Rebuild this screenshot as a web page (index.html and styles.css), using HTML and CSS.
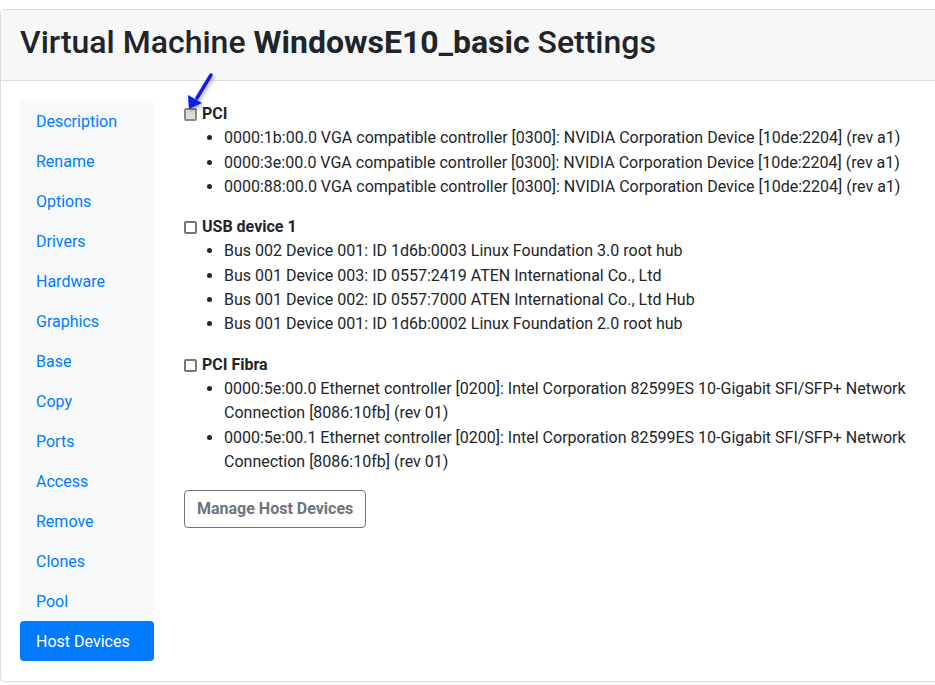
FILE: index.html
```html
<!DOCTYPE html>
<html>
<head>
<meta charset="utf-8">
<title>VM Settings</title>
<link rel="stylesheet" href="styles.css">
</head>
<body>
<div class="card">
  <div class="card-header">
    <h3 class="title">Virtual Machine <b>WindowsE10_basic</b> Settings</h3>
  </div>
  <div class="card-body">
    <nav class="nav-pills">
      <a class="nav-link">Description</a>
      <a class="nav-link">Rename</a>
      <a class="nav-link">Options</a>
      <a class="nav-link">Drivers</a>
      <a class="nav-link">Hardware</a>
      <a class="nav-link">Graphics</a>
      <a class="nav-link">Base</a>
      <a class="nav-link">Copy</a>
      <a class="nav-link">Ports</a>
      <a class="nav-link">Access</a>
      <a class="nav-link">Remove</a>
      <a class="nav-link">Clones</a>
      <a class="nav-link">Pool</a>
      <a class="nav-link active">Host Devices</a>
    </nav>
    <div class="content">
      <div class="group">
        <label class="group-label first"><input type="checkbox" class="cb"><span>PCI</span>
          <svg class="arrow" width="32" height="40" viewBox="0 0 32 40"><path d="M27 3 L13 26" stroke="#0b1de8" stroke-width="3.4" stroke-linecap="round" fill="none"/><path d="M5 37 L4 23 L18 31 Z" fill="#0b1de8"/></svg>
        </label>
        <ul class="dev-list">
          <li>0000:1b:00.0 VGA compatible controller [0300]: NVIDIA Corporation Device [10de:2204] (rev a1)</li>
          <li>0000:3e:00.0 VGA compatible controller [0300]: NVIDIA Corporation Device [10de:2204] (rev a1)</li>
          <li>0000:88:00.0 VGA compatible controller [0300]: NVIDIA Corporation Device [10de:2204] (rev a1)</li>
        </ul>
      </div>
      <div class="group">
        <label class="group-label"><input type="checkbox" class="cb"><span>USB device 1</span></label>
        <ul class="dev-list">
          <li>Bus 002 Device 001: ID 1d6b:0003 Linux Foundation 3.0 root hub</li>
          <li>Bus 001 Device 003: ID 0557:2419 ATEN International Co., Ltd</li>
          <li>Bus 001 Device 002: ID 0557:7000 ATEN International Co., Ltd Hub</li>
          <li>Bus 001 Device 001: ID 1d6b:0002 Linux Foundation 2.0 root hub</li>
        </ul>
      </div>
      <div class="group">
        <label class="group-label"><input type="checkbox" class="cb"><span>PCI Fibra</span></label>
        <ul class="dev-list">
          <li>0000:5e:00.0 Ethernet controller [0200]: Intel Corporation 82599ES 10-Gigabit SFI/SFP+ Network Connection [8086:10fb] (rev 01)</li>
          <li>0000:5e:00.1 Ethernet controller [0200]: Intel Corporation 82599ES 10-Gigabit SFI/SFP+ Network Connection [8086:10fb] (rev 01)</li>
        </ul>
      </div>
      <button class="btn-outline">Manage Host Devices</button>
    </div>
  </div>
</div>
</body>
</html>
```

FILE: styles.css
```css
html, body {
  margin: 0;
  padding: 0;
  background: #fff;
  overflow: hidden;
}
body {
  font-family: Roboto, "Liberation Sans", sans-serif;
  font-size: 16px;
  line-height: 24px;
  color: #212529;
  padding-top: 9px;
  width: 935px;
  height: 685px;
}
.card {
  width: 980px;
  height: 673px;
  box-sizing: border-box;
  border: 1px solid #dcdcdc;
  border-radius: 4px;
  display: flex;
  flex-direction: column;
}
.card-header {
  background: #f7f7f7;
  border-bottom: 1px solid #dcdcdc;
  height: 71px;
  box-sizing: border-box;
  padding: 0 19px 6px;
  display: flex;
  align-items: center;
}
.title {
  margin: 0;
  font-size: 32px;
  font-weight: 500;
  line-height: 38px;
  color: #212529;
  white-space: nowrap;
}
.title b { font-weight: 700; }
.card-body {
  display: flex;
  padding: 20px 19px;
  gap: 30px;
}
.nav-pills {
  width: 134px;
  flex: none;
  background: #f8f9fa;
  display: flex;
  flex-direction: column;
  align-self: flex-start;
}
.nav-link {
  display: block;
  height: 40px;
  line-height: 41px;
  padding: 0 16px;
  color: #007bff;
  border-radius: 4px;
  white-space: nowrap;
}
.nav-link.active {
  background: #007bff;
  color: #fff;
}
.content {
  width: 740px;
  line-height: 24.3px;
  padding-top: 1px;
}
.group-label {
  position: relative;
  display: flex;
  align-items: center;
  font-weight: 700;
  height: 24.3px;
}
.cb {
  appearance: none;
  width: 13px;
  height: 13px;
  margin: 1px 5px 0 0;
  border: 2px solid #767676;
  border-radius: 2px;
  box-sizing: border-box;
  background: #fff;
}
.first .cb { background: #dedede; border-color: #8a8a8a; }
.arrow {
  position: absolute;
  left: 0;
  top: -30px;
  filter: drop-shadow(1px 2px 2px rgba(0, 0, 0, 0.35));
}
.dev-list {
  margin: 0 0 16px 0;
  padding-left: 40px;
}
.btn-outline {
  font-family: Roboto, "Liberation Sans", sans-serif;
  font-size: 16px;
  font-weight: 700;
  line-height: 24px;
  color: #6c757d;
  background: #fff;
  border: 1px solid #6c757d;
  border-radius: 4px;
  padding: 6px 12px;
  height: 38px;
}
```
